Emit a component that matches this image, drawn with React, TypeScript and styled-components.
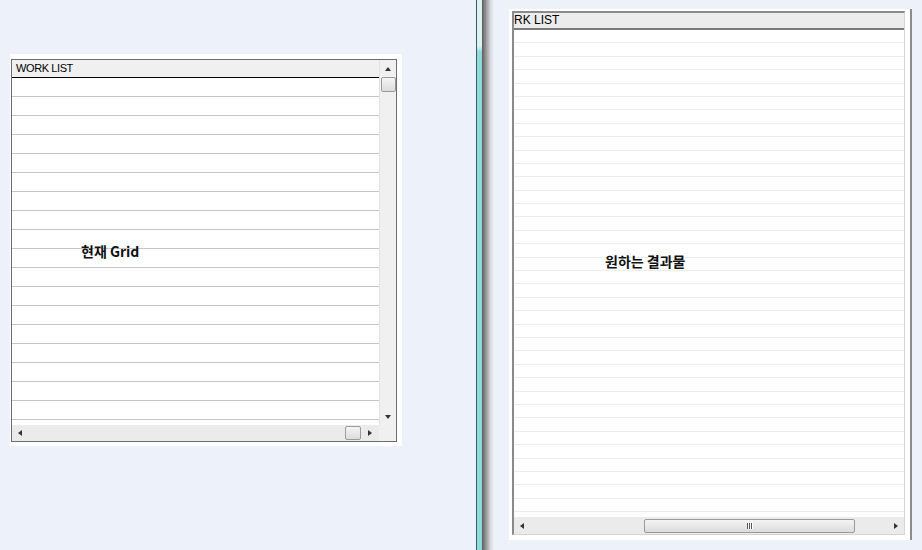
import React from "react";
import styled, { createGlobalStyle, css } from "styled-components";

const GlobalStyle = createGlobalStyle`
  html, body { margin: 0; padding: 0; }
  body {
    background: #edf1f9;
    width: 922px;
    height: 550px;
    overflow: hidden;
    font-family: "Liberation Sans", Arial, sans-serif;
  }
`;

const Page = styled.div`
  display: flex;
  height: 550px;
  width: 922px;
`;

const LeftPane = styled.div`
  width: 476px;
  flex: none;
  padding: 54px 0 0 10px;
  box-sizing: border-box;
`;

const WhitePanel = styled.div<{ $w: number; $h: number; $pad: string; $edge?: boolean }>`
  width: ${(p) => p.$w}px;
  height: ${(p) => p.$h}px;
  padding: ${(p) => p.$pad};
  box-sizing: border-box;
  background: #ffffff;
  ${(p) =>
    p.$edge &&
    css`
      border-right: 2px solid #8c8c8c;
    `}
`;

const LeftGrid = styled.div`
  position: relative;
  height: 100%;
  box-sizing: border-box;
  border: 1px solid #6b6b6b;
  display: grid;
  grid-template-columns: 1fr 17px;
  grid-template-rows: 1fr 16px;
  overflow: hidden;
`;

const Body = styled.div`
  display: flex;
  flex-direction: column;
  overflow: hidden;
  min-height: 0;
`;

const LeftHeader = styled.div`
  flex: none;
  height: 18px;
  box-sizing: border-box;
  background: #f0f0f0;
  border-bottom: 1px solid #000;
  font-size: 11px;
  line-height: 17px;
  padding-left: 4px;
  color: #000;
  letter-spacing: -0.4px;
`;

const LeftRow = styled.div`
  flex: none;
  height: 19px;
  box-sizing: border-box;
  border-bottom: 1px solid #c4c4c4;
  background: #fff;
`;

const VScroll = styled.div`
  background: #f0f0f0;
  border-left: 1px solid #e2e2e2;
  display: flex;
  flex-direction: column;
  align-items: center;
`;

const HScroll = styled.div<{ $h?: number }>`
  background: #ebebeb;
  display: flex;
  align-items: center;
  height: ${(p) => p.$h ?? 16}px;
  box-sizing: border-box;
`;

const Corner = styled.div`
  background: #f0f0f0;
`;

const ArrowBtn = styled.div<{ $size: number }>`
  flex: none;
  width: ${(p) => p.$size}px;
  height: ${(p) => p.$size}px;
  display: flex;
  align-items: center;
  justify-content: center;
`;

const Tri = styled.span<{ $dir: "up" | "down" | "left" | "right" }>`
  width: 0;
  height: 0;
  ${(p) =>
    p.$dir === "up" &&
    css`
      border-left: 3.5px solid transparent;
      border-right: 3.5px solid transparent;
      border-bottom: 4px solid #333;
    `}
  ${(p) =>
    p.$dir === "down" &&
    css`
      border-left: 3.5px solid transparent;
      border-right: 3.5px solid transparent;
      border-top: 4px solid #333;
    `}
  ${(p) =>
    p.$dir === "left" &&
    css`
      border-top: 3.5px solid transparent;
      border-bottom: 3.5px solid transparent;
      border-right: 4px solid #333;
    `}
  ${(p) =>
    p.$dir === "right" &&
    css`
      border-top: 3.5px solid transparent;
      border-bottom: 3.5px solid transparent;
      border-left: 4px solid #333;
    `}
`;

const Thumb = styled.div<{ $w: number; $h: number }>`
  flex: none;
  width: ${(p) => p.$w}px;
  height: ${(p) => p.$h}px;
  box-sizing: border-box;
  border: 1px solid #9a9a9a;
  border-radius: 2px;
  background: linear-gradient(to bottom, #f4f4f4, #dcdcdc);
  display: flex;
  align-items: center;
  justify-content: center;
`;

const Grip = styled.span`
  display: flex;
  gap: 1px;
  & > i {
    display: block;
    width: 1px;
    height: 6px;
    background: #555;
    box-shadow: 1px 0 0 #fff;
  }
`;

const Track = styled.div`
  flex: 1;
`;

const Spacer = styled.div<{ $w: number }>`
  flex: none;
  width: ${(p) => p.$w}px;
`;

const Note = styled.div<{ $left: number; $top: number }>`
  position: absolute;
  left: ${(p) => p.$left}px;
  top: ${(p) => p.$top}px;
  font-family: "Noto Sans CJK KR", "Liberation Sans", sans-serif;
  font-weight: 700;
  font-size: 14px;
  line-height: 16px;
  color: #111;
  white-space: nowrap;
`;

const Divider = styled.div`
  flex: none;
  width: 6px;
  box-sizing: border-box;
  border-left: 1px solid #3e5c5c;
  background: linear-gradient(to bottom, #dcf2f2 0, #dcf2f2 46px, #8fdbdb 52px, #8fdbdb 100%);
`;

const Shadow = styled.div`
  flex: none;
  width: 12px;
  background: linear-gradient(to right, #5c5c5c 0%, #9a9a9a 35%, #d4d8de 70%, #edf1f9 100%);
`;

const RightPane = styled.div`
  flex: 1;
  padding: 9px 0 0 15px;
  box-sizing: border-box;
`;

const RightGrid = styled.div`
  position: relative;
  height: 100%;
  box-sizing: border-box;
  border-left: 2px solid #8a8a8a;
  border-top: 2px solid #8a8a8a;
  border-right: 1px solid #d4d4d4;
  border-bottom: 1px solid #d4d4d4;
  display: flex;
  flex-direction: column;
  overflow: hidden;
`;

const RightHeader = styled.div`
  flex: none;
  height: 17px;
  box-sizing: border-box;
  background: #ececec;
  border-bottom: 2px solid #7a7a7a;
  font-size: 12px;
  line-height: 14px;
  color: #000;
  white-space: nowrap;
`;

const RightRows = styled.div`
  flex: 1;
  overflow: hidden;
  min-height: 0;
`;

const RightRow = styled.div`
  height: 13.4px;
  box-sizing: border-box;
  border-bottom: 1px solid #ececec;
`;

const leftRows = Array.from({ length: 19 });
const rightRows = Array.from({ length: 38 });

export default function App() {
  return (
    <>
      <GlobalStyle />
      <Page>
        <LeftPane>
          <WhitePanel $w={392} $h={392} $pad="5px 5px 4px 1px">
            <LeftGrid>
              <Body>
                <LeftHeader>WORK LIST</LeftHeader>
                {leftRows.map((_, i) => (
                  <LeftRow key={i} />
                ))}
              </Body>
              <VScroll>
                <ArrowBtn $size={17}>
                  <Tri $dir="up" />
                </ArrowBtn>
                <Thumb $w={15} $h={15} />
                <Track />
                <ArrowBtn $size={17}>
                  <Tri $dir="down" />
                </ArrowBtn>
              </VScroll>
              <HScroll>
                <ArrowBtn $size={16}>
                  <Tri $dir="left" />
                </ArrowBtn>
                <Track />
                <Thumb $w={16} $h={14} />
                <ArrowBtn $size={18}>
                  <Tri $dir="right" />
                </ArrowBtn>
              </HScroll>
              <Corner />
              <Note $left={69} $top={183}>현재 Grid</Note>
            </LeftGrid>
          </WhitePanel>
        </LeftPane>
        <Divider />
        <Shadow />
        <RightPane>
          <WhitePanel $w={403} $h={531} $pad="2px 5px 5px 3px" $edge>
            <RightGrid>
              <RightHeader>RK LIST</RightHeader>
              <RightRows>
                {rightRows.map((_, i) => (
                  <RightRow key={i} />
                ))}
              </RightRows>
              <HScroll $h={17}>
                <ArrowBtn $size={16}>
                  <Tri $dir="left" />
                </ArrowBtn>
                <Spacer $w={114} />
                <Thumb $w={211} $h={14}>
                  <Grip>
                    <i />
                    <i />
                    <i />
                  </Grip>
                </Thumb>
                <Track />
                <ArrowBtn $size={16}>
                  <Tri $dir="right" />
                </ArrowBtn>
              </HScroll>
              <Note $left={91} $top={240}>원하는 결과물</Note>
            </RightGrid>
          </WhitePanel>
        </RightPane>
      </Page>
    </>
  );
}
